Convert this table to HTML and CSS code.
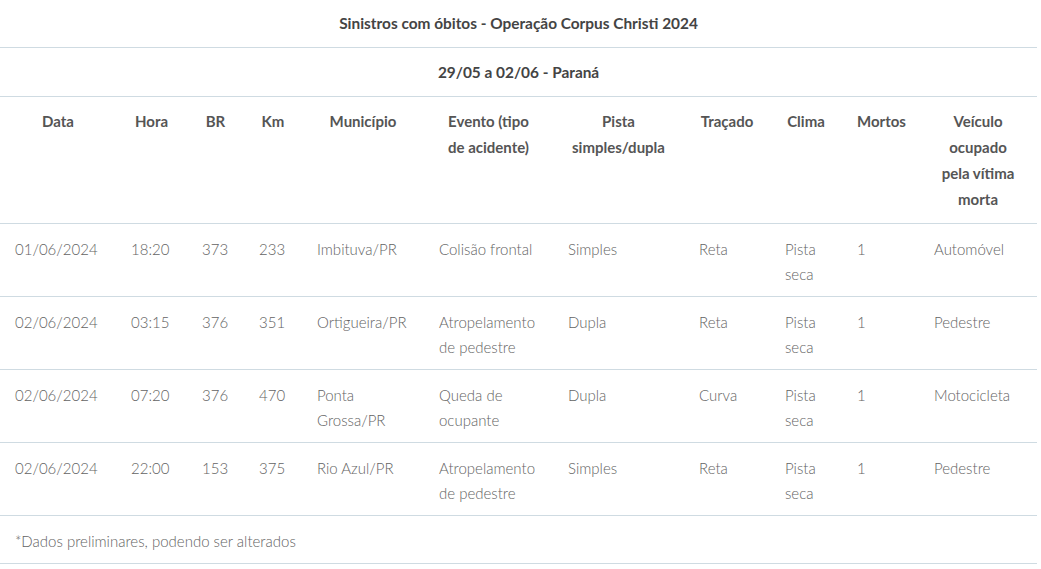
FILE: index.html
```html
<!DOCTYPE html>
<html lang="pt-BR">
<head>
<meta charset="utf-8">
<title>Sinistros com óbitos - Operação Corpus Christi 2024</title>
<link rel="stylesheet" href="styles.css">
</head>
<body>
<table class="data-table">
  <colgroup>
    <col class="c-data"><col class="c-hora"><col class="c-br"><col class="c-km"><col class="c-mun">
    <col class="c-evt"><col class="c-pista"><col class="c-trac"><col class="c-clima"><col class="c-mortos"><col class="c-veic">
  </colgroup>
  <thead>
    <tr class="title-row"><th colspan="11">Sinistros com óbitos - Operação Corpus Christi 2024</th></tr>
    <tr class="sub-row"><th colspan="11">29/05 a 02/06 - Paraná</th></tr>
    <tr class="col-row">
      <th>Data</th><th>Hora</th><th>BR</th><th>Km</th><th>Município</th>
      <th>Evento (tipo de acidente)</th><th>Pista simples/dupla</th><th>Traçado</th><th>Clima</th><th>Mortos</th>
      <th>Veículo ocupado pela vítima morta</th>
    </tr>
  </thead>
  <tbody>
    <tr>
      <td>01/06/2024</td><td>18:20</td><td>373</td><td>233</td><td>Imbituva/PR</td>
      <td>Colisão frontal</td><td>Simples</td><td>Reta</td><td>Pista seca</td><td>1</td><td>Automóvel</td>
    </tr>
    <tr>
      <td>02/06/2024</td><td>03:15</td><td>376</td><td>351</td><td>Ortigueira/PR</td>
      <td>Atropelamento de pedestre</td><td>Dupla</td><td>Reta</td><td>Pista seca</td><td>1</td><td>Pedestre</td>
    </tr>
    <tr>
      <td>02/06/2024</td><td>07:20</td><td>376</td><td>470</td><td>Ponta Grossa/PR</td>
      <td>Queda de ocupante</td><td>Dupla</td><td>Curva</td><td>Pista seca</td><td>1</td><td>Motocicleta</td>
    </tr>
    <tr>
      <td>02/06/2024</td><td>22:00</td><td>153</td><td>375</td><td>Rio Azul/PR</td>
      <td>Atropelamento de pedestre</td><td>Simples</td><td>Reta</td><td>Pista seca</td><td>1</td><td>Pedestre</td>
    </tr>
  </tbody>
  <tfoot>
    <tr><td colspan="11">*Dados preliminares, podendo ser alterados</td></tr>
  </tfoot>
</table>
</body>
</html>
```
FILE: styles.css
```css
html, body {
  margin: 0;
  padding: 0;
  background: #ffffff;
}

body {
  font-family: "Lato", "Open Sans", sans-serif;
  font-size: 15px;
  color: #666666;
}

.data-table {
  width: 1037px;
  table-layout: fixed;
  border-collapse: collapse;
  border-spacing: 0;
}

.c-data { width: 116px; }
.c-hora { width: 71px; }
.c-br { width: 57px; }
.c-km { width: 58px; }
.c-mun { width: 122px; }
.c-evt { width: 129px; }
.c-pista { width: 131px; }
.c-trac { width: 86px; }
.c-clima { width: 72px; }
.c-mortos { width: 77px; }
.c-veic { width: 118px; }

.data-table th {
  font-weight: 700;
  color: #4a4a4a;
  text-align: center;
  vertical-align: top;
  line-height: 26px;
  padding: 11px 15px 11px;
}

.title-row th {
  font-size: 15.4px;
  padding: 10px 15px 11px;
  color: #444444;
  border-bottom: 1px solid #cfdbe2;
}

.sub-row th {
  font-size: 15.4px;
  padding: 11px 15px 11px;
  color: #444444;
  border-bottom: 1px solid #cfdbe2;
}

.col-row th {
  color: #555555;
}

.data-table td {
  font-weight: 300;
  color: #636363;
  text-align: left;
  vertical-align: top;
  line-height: 25px;
  padding: 13px 15px 9px;
  border-top: 1px solid #cfdbe2;
}

.data-table tfoot td {
  border-bottom: 1px solid #cfdbe2;
  padding: 13px 15px 9px;
}
```
